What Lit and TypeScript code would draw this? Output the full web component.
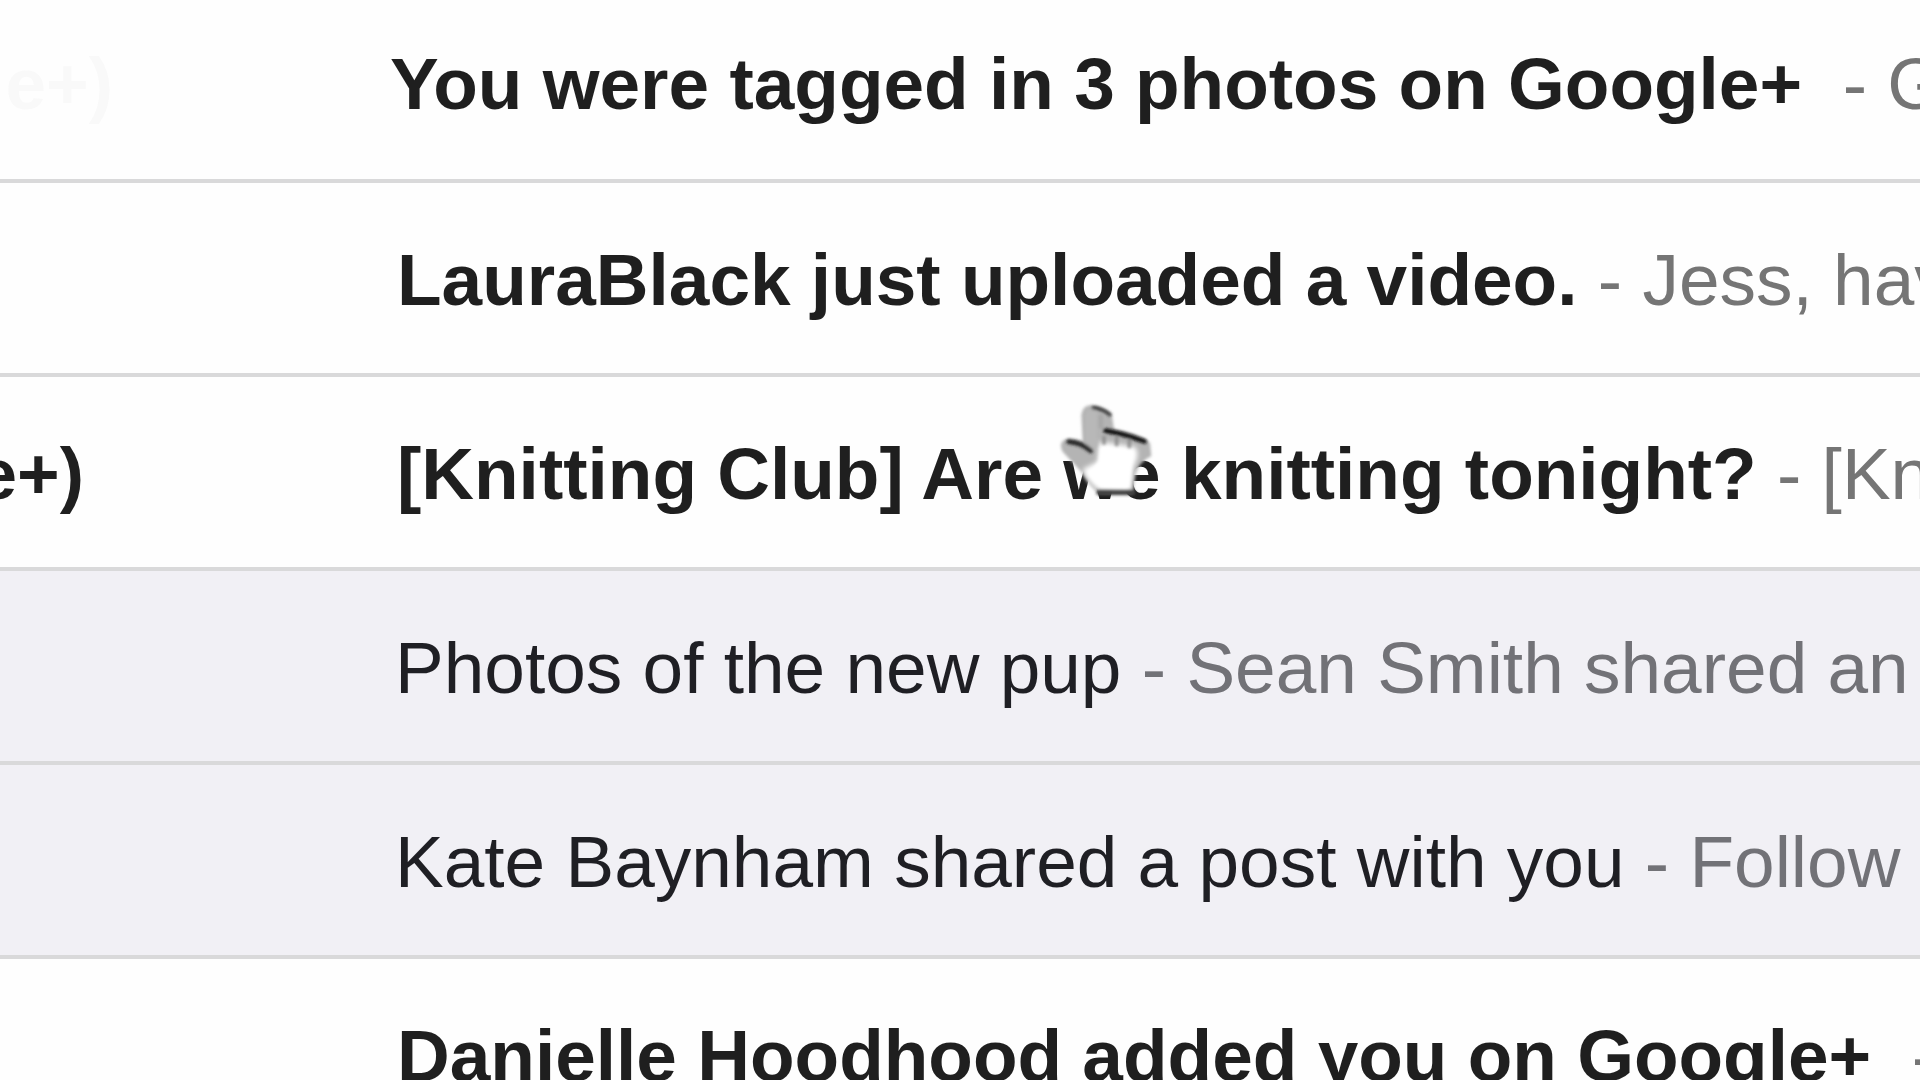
import { LitElement, html, css } from "lit";
import { customElement, property } from "lit/decorators.js";
import { classMap } from "lit/directives/class-map.js";

interface Message {
  sender?: string;
  fading?: boolean;
  subject: string;
  snippet: string;
  read?: boolean;
  wideGap?: boolean;
}

const messages: Message[] = [
  { sender: "e+)", fading: true, subject: "You were tagged in 3 photos on Google+", snippet: "G", wideGap: true },
  { subject: "LauraBlack just uploaded a video.", snippet: "Jess, hav" },
  { sender: "e+)", subject: "[Knitting Club] Are we knitting tonight?", snippet: "[Kn" },
  { subject: "Photos of the new pup", snippet: "Sean Smith shared an", read: true },
  { subject: "Kate Baynham shared a post with you", snippet: "Follow", read: true },
  { subject: "Danielle Hoodhood added you on Google+", snippet: "", wideGap: true },
];

@customElement("message-row")
export class MessageRow extends LitElement {
  @property({ attribute: false }) message!: Message;

  static styles = css`
    :host {
      display: block;
    }
    .row {
      display: grid;
      grid-template-columns: 397px 1fr;
      align-items: center;
      box-sizing: border-box;
      min-height: 194px;
      padding-top: 4px;
      border-bottom: 4px solid #d9d9da;
      background: #fefefe;
      color: #1f1f1f;
      font-weight: 700;
      text-decoration: none;
      white-space: pre;
    }
    .row.read {
      grid-template-columns: 395px 1fr;
      background: #f1f0f5;
      color: #1f1f24;
      font-weight: 400;
    }
    .row.fading {
      grid-template-columns: 390px 1fr;
      padding-top: 0;
    }
    .sender {
      display: flex;
      justify-content: flex-end;
      padding-right: 313px;
      overflow: hidden;
    }
    .fading .sender {
      padding-right: 277px;
      color: #f9f9f9;
    }
    .line {
      overflow: hidden;
    }
    .snippet {
      color: #757575;
      font-weight: 400;
    }
    .read .snippet {
      color: #727277;
    }
  `;

  render() {
    const m = this.message;
    const gap = m.wideGap ? "  " : " ";
    return html`<a class=${classMap({ row: true, read: !!m.read, fading: !!m.fading })} href="#">
      <span class="sender">${m.sender ?? ""}</span>
      <span class="line"><span class="subject">${m.subject}</span><span class="snippet">${gap}- ${m.snippet}</span></span></a>`;
  }
}

@customElement("hand-pointer")
export class HandPointer extends LitElement {
  static styles = css`
    :host {
      display: block;
    }
    .hand {
      display: block;
      width: 180px;
      height: 140px;
    }
  `;

  render() {
    return html`<svg class="hand" viewBox="0 0 540 420" aria-hidden="true">
      <defs>
        <filter id="soft" x="-20%" y="-20%" width="140%" height="140%"><feGaussianBlur stdDeviation="5" /></filter>
        <filter id="softer" x="-20%" y="-20%" width="140%" height="140%"><feGaussianBlur stdDeviation="8" /></filter>
      </defs>
      <path d="M184 104 Q188 76 214 76 Q262 84 276 108 L282 148 Q350 158 390 188 L394 228 Q356 246 346 285 L338 340 L236 340 Q205 315 184 275 L128 215 Q112 182 145 176 Q172 176 188 184 Z"
        fill="#b4b4b4" filter="url(#soft)" />
      <path d="M238 185 L345 200 Q362 220 340 262 L330 336 L236 328 Q205 310 188 268 L232 245 Z"
        fill="#ffffff" filter="url(#softer)" />
      <path d="M240 200 L338 212 L328 322 L244 322 L204 282 L236 245 Z" fill="#ffffff" filter="url(#soft)" />
      <g fill="none" stroke-linecap="round" filter="url(#soft)">
        <path d="M214 190 V104" stroke="#b8b8b8" stroke-width="34" />
        <path d="M242 140 V110" stroke="#a8a8a8" stroke-width="14" />
        <path d="M220 83 Q248 86 270 104" stroke="#3a3a3a" stroke-width="11" />
        <path d="M256 152 Q300 158 374 184" stroke="#101010" stroke-width="14" />
        <path d="M146 185 Q184 188 212 212" stroke="#222222" stroke-width="14" />
        <path d="M252 172 V190 M290 174 V194 M328 182 V200" stroke="#8c8c8c" stroke-width="10" />
        <path d="M236 338 H340" stroke="#3a3a3a" stroke-width="14" />
      </g>
    </svg>`;
  }
}

@customElement("app-root")
export class AppRoot extends LitElement {
  static styles = css`
    :host {
      display: block;
      position: relative;
      height: 100vh;
      overflow: hidden;
      background: #fefefe;
      font-family: "Liberation Sans", Arial, sans-serif;
      font-size: 73px;
      line-height: 84px;
    }
    .list {
      margin: -11px 0 0;
      padding: 0;
      list-style: none;
    }
    .pointer {
      position: absolute;
      left: 1020px;
      top: 380px;
      pointer-events: none;
    }
  `;

  render() {
    return html`
      <ul class="list">
        ${messages.map((m) => html`<li><message-row .message=${m}></message-row></li>`)}
      </ul>
      <hand-pointer class="pointer"></hand-pointer>
    `;
  }
}
